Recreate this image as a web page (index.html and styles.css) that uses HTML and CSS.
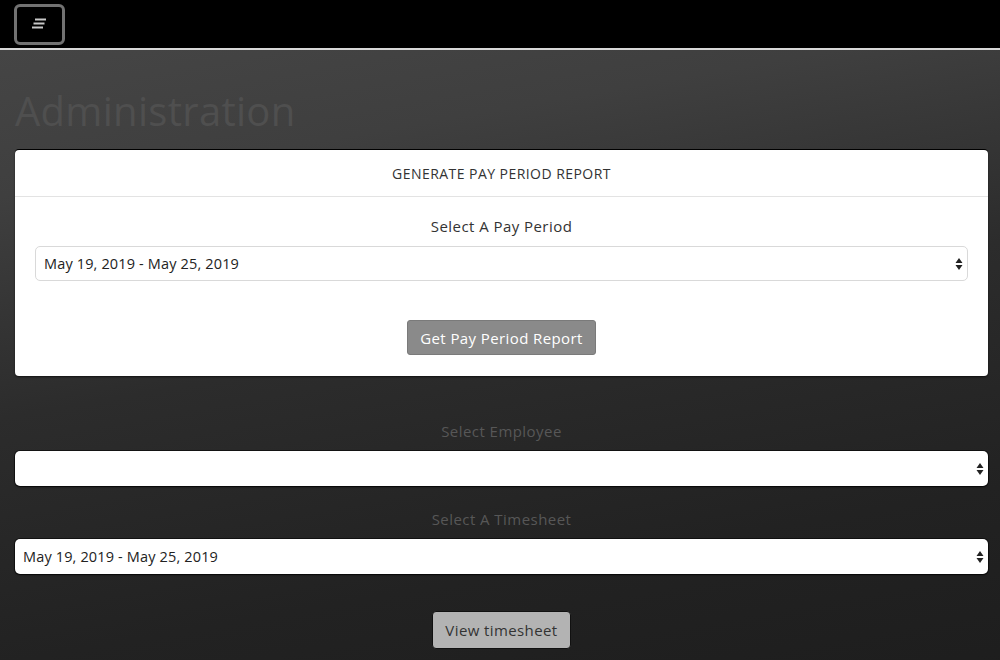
FILE: index.html
```html
<!DOCTYPE html>
<html>
<head>
<meta charset="utf-8">
<link rel="stylesheet" href="styles.css">
</head>
<body>
<nav class="topbar">
  <button class="menu-btn" aria-label="menu">
    <svg width="20" height="12" viewBox="0 0 20 12">
      <path d="M5 1.5 H16 M3.5 5.5 H14.5 M2 9.5 H13" stroke="#c8c8c8" stroke-width="2" fill="none"/>
    </svg>
  </button>
</nav>
<main class="page">
  <h1 class="title">Administration</h1>
  <section class="card">
    <div class="card-header">GENERATE PAY PERIOD REPORT</div>
    <div class="card-body">
      <label class="label-light">Select A Pay Period</label>
      <div class="select bordered">May 19, 2019 - May 25, 2019</div>
      <div class="btn-row"><button class="btn btn-dark">Get Pay Period Report</button></div>
    </div>
  </section>
  <section class="lower">
    <label class="label-dark">Select Employee</label>
    <div class="select shadowed"></div>
    <label class="label-dark second">Select A Timesheet</label>
    <div class="select shadowed">May 19, 2019 - May 25, 2019</div>
    <div class="btn-row"><button class="btn btn-light">View timesheet</button></div>
  </section>
</main>
</body>
</html>
```
FILE: styles.css
```css
html, body {
  margin: 0;
  padding: 0;
  height: 100%;
}
body {
  font-family: "Open Sans", "Liberation Sans", sans-serif;
  background: #000;
  overflow: hidden;
}
.topbar {
  height: 48px;
  background: #000;
  border-bottom: 2px solid #d8d8d8;
  display: flex;
  align-items: center;
  padding-left: 14px;
}
.menu-btn {
  width: 51px;
  height: 41px;
  background: #000;
  border: 3px solid #727272;
  border-radius: 6px;
  display: flex;
  align-items: center;
  justify-content: center;
  padding: 0;
}
.page {
  min-height: 610px;
  background: linear-gradient(170deg, #454545 0%, #3f3f3f 18%, #2c2c2c 45%, #222 75%, #1d1d1d 100%);
  padding: 32px 12px 0 15px;
}
.title {
  margin: 0;
  font-weight: 400;
  font-size: 40px;
  line-height: 58px;
  color: #4f4f4f;
  letter-spacing: 0.3px;
}
.card {
  margin-top: 10px;
  background: #fff;
  border-radius: 4px;
  box-shadow: 0 -1px 0 #000, 0 1px 2px rgba(0,0,0,0.6);
}
.card-header {
  height: 46px;
  border-bottom: 1px solid #e3e3e3;
  display: flex;
  align-items: center;
  justify-content: center;
  font-size: 14px;
  letter-spacing: 0.45px;
  color: #333;
}
.card-body {
  padding: 18px 20px 21px;
  display: flex;
  flex-direction: column;
}
.label-light, .label-dark {
  text-align: center;
  font-size: 15px;
  letter-spacing: 0.45px;
  line-height: 22px;
}
.label-light { color: #333; margin-bottom: 9px; }
.label-dark { color: #575757; margin-top: 44px; margin-bottom: 9px; display: block; }
.label-dark.second { margin-top: 22px; }
.select {
  height: 35px;
  box-sizing: border-box;
  background: #fff url("data:image/svg+xml,%3Csvg xmlns='http://www.w3.org/2000/svg' width='8' height='14' viewBox='0 0 8 14'%3E%3Cpath d='M4 1 L7.5 6 H0.5 Z M4 13 L7.5 8 H0.5 Z' fill='%23222'/%3E%3C/svg%3E") no-repeat right 4px center;
  border-radius: 5px;
  padding: 0 8px;
  display: flex;
  align-items: center;
  font-size: 14.5px;
  letter-spacing: 0.15px;
  color: #222;
}
.bordered {
  border: 1px solid #d9d9d9;
}
.shadowed {
  box-shadow: 0 0 0 1px rgba(0,0,0,0.5), 0 1px 2px rgba(0,0,0,0.6);
}
.btn-row {
  display: flex;
  justify-content: center;
  margin-top: 39px;
}
.btn {
  font-family: inherit;
  font-size: 15px;
  letter-spacing: 0.4px;
  border-radius: 3px;
  cursor: pointer;
}
.btn-dark {
  height: 35px;
  padding: 0 12px;
  background: #8a8a8a;
  color: #fff;
  border: 1px solid #7a7a7a;
}
.btn-light {
  height: 38px;
  padding: 0 12px;
  background: #b3b3b3;
  color: #333;
  border: 1px solid #111;
  border-radius: 4px;
}
.lower .btn-row { margin-top: 37px; }
```
